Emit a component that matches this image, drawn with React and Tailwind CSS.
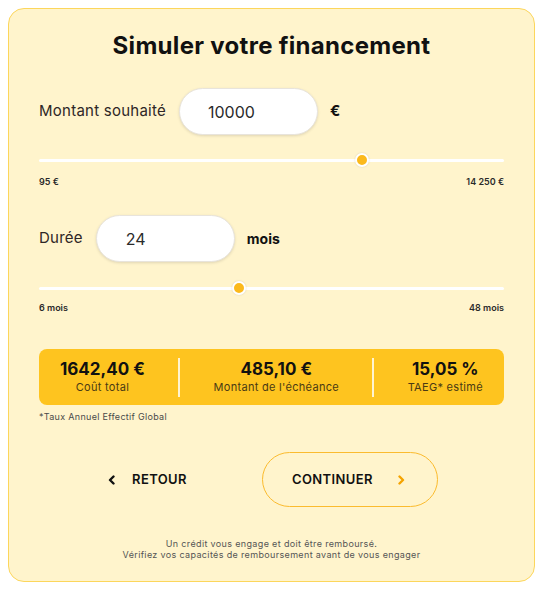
import React from "react";

function Slider({ pct }) {
  return (
    <div className="relative h-[14px] w-full">
      <div className="absolute left-0 right-0 top-[5.5px] h-[3px] rounded-full bg-white" />
      <div
        className="absolute top-0 h-[14px] w-[14px] -translate-x-1/2 rounded-full border-2 border-white bg-[#fbb91c] shadow-[0_0_2px_rgba(0,0,0,0.15)]"
        style={{ left: `${pct}%` }}
      />
    </div>
  );
}

function Chevron({ dir, color, className }) {
  return (
    <svg width="7" height="10" viewBox="0 0 7 10" className={className}>
      <polyline
        points={dir === "left" ? "5.5,1.5 2,5 5.5,8.5" : "1.5,1.5 5,5 1.5,8.5"}
        fill="none"
        stroke={color}
        strokeWidth="2.4"
        strokeLinecap="round"
        strokeLinejoin="round"
      />
    </svg>
  );
}

export default function App() {
  return (
    <div className="bg-white w-[550px] h-[600px] pt-2 pl-2" style={{ fontFamily: "Inter, 'Noto Sans', sans-serif" }}>
      <div className="w-[527px] h-[574px] rounded-[16px] border border-[#fcd65c] bg-[#fff4cc] px-[30px] flex flex-col">
        <h1 className="mt-[22px] text-center text-[24px] leading-[30px] font-bold tracking-[0.3px] text-[#111]">
          Simuler votre financement
        </h1>

        <div className="mt-[27px] flex items-center h-[47px]">
          <span className="text-[15px] tracking-[0.25px] text-[#2e2626]">Montant souhaité</span>
          <div className="ml-[13px] h-[47px] w-[139px] rounded-full bg-white border border-[#e8e4dc] shadow-[0_1px_3px_rgba(0,0,0,0.12)] flex items-center pl-[28px] text-[16px] text-[#2a2a2a]">
            10000
          </div>
          <span className="ml-[12px] text-[15px] font-bold text-[#111]">€</span>
        </div>

        <div className="mt-[18px]">
          <Slider pct={69.5} />
        </div>
        <div className="mt-[9px] flex justify-between text-[9px] leading-[12px] font-semibold text-[#2a2a2a]">
          <span>95 €</span>
          <span>14 250 €</span>
        </div>

        <div className="mt-[27px] flex items-center h-[47px]">
          <span className="text-[15px] tracking-[0.25px] text-[#2e2626]">Durée</span>
          <div className="ml-[13px] h-[47px] w-[139px] rounded-full bg-white border border-[#e8e4dc] shadow-[0_1px_3px_rgba(0,0,0,0.12)] flex items-center pl-[29px] text-[16px] text-[#2a2a2a]">
            24
          </div>
          <span className="ml-[12px] text-[14px] font-bold text-[#111]">mois</span>
        </div>

        <div className="mt-[19px]">
          <Slider pct={43} />
        </div>
        <div className="mt-[7px] flex justify-between text-[9px] leading-[12px] font-semibold text-[#2a2a2a]">
          <span>6 mois</span>
          <span>48 mois</span>
        </div>

        <div className="mt-[35px] h-[56px] rounded-[8px] bg-[#fec41f] flex items-center justify-between px-[21px]">
          <div className="flex flex-col items-center">
            <span className="text-[17px] leading-[20px] font-bold text-[#111]">1642,40 €</span>
            <span className="text-[11px] leading-[16px] tracking-[0.3px] text-[#4a3a14]">Coût total</span>
          </div>
          <div className="h-[39px] w-[2px] bg-[#fff4d0]" />
          <div className="flex flex-col items-center">
            <span className="text-[17px] leading-[20px] font-bold text-[#111]">485,10 €</span>
            <span className="text-[11px] leading-[16px] tracking-[0.3px] text-[#4a3a14]">Montant de l'échéance</span>
          </div>
          <div className="h-[39px] w-[2px] bg-[#fff4d0]" />
          <div className="flex flex-col items-center">
            <span className="text-[17px] leading-[20px] font-bold text-[#111]">15,05 %</span>
            <span className="text-[11px] leading-[16px] tracking-[0.3px] text-[#4a3a14]">TAEG* estimé</span>
          </div>
        </div>
        <p className="mt-[6px] text-[9px] leading-[12px] tracking-[0.3px] text-[#4a4a4a]">*Taux Annuel Effectif Global</p>

        <div className="mt-[29px] flex items-center">
          <div className="ml-[69px] flex items-center gap-[17px]">
            <Chevron dir="left" color="#111" />
            <span className="text-[13px] font-semibold tracking-[0.4px] text-[#111]">RETOUR</span>
          </div>
          <div className="ml-[75px] h-[55px] w-[176px] rounded-full border-[1.5px] border-[#fbbb2e] flex items-center pl-[29px]">
            <span className="text-[13px] font-semibold tracking-[0.4px] text-[#111]">CONTINUER</span>
            <Chevron dir="right" color="#f5a300" className="ml-[25px]" />
          </div>
        </div>

        <div className="mt-[31px] text-center text-[9px] leading-[11px] tracking-[0.35px] text-[#555]">
          <p>Un crédit vous engage et doit être remboursé.</p>
          <p>Vérifiez vos capacités de remboursement avant de vous engager</p>
        </div>
      </div>
    </div>
  );
}
